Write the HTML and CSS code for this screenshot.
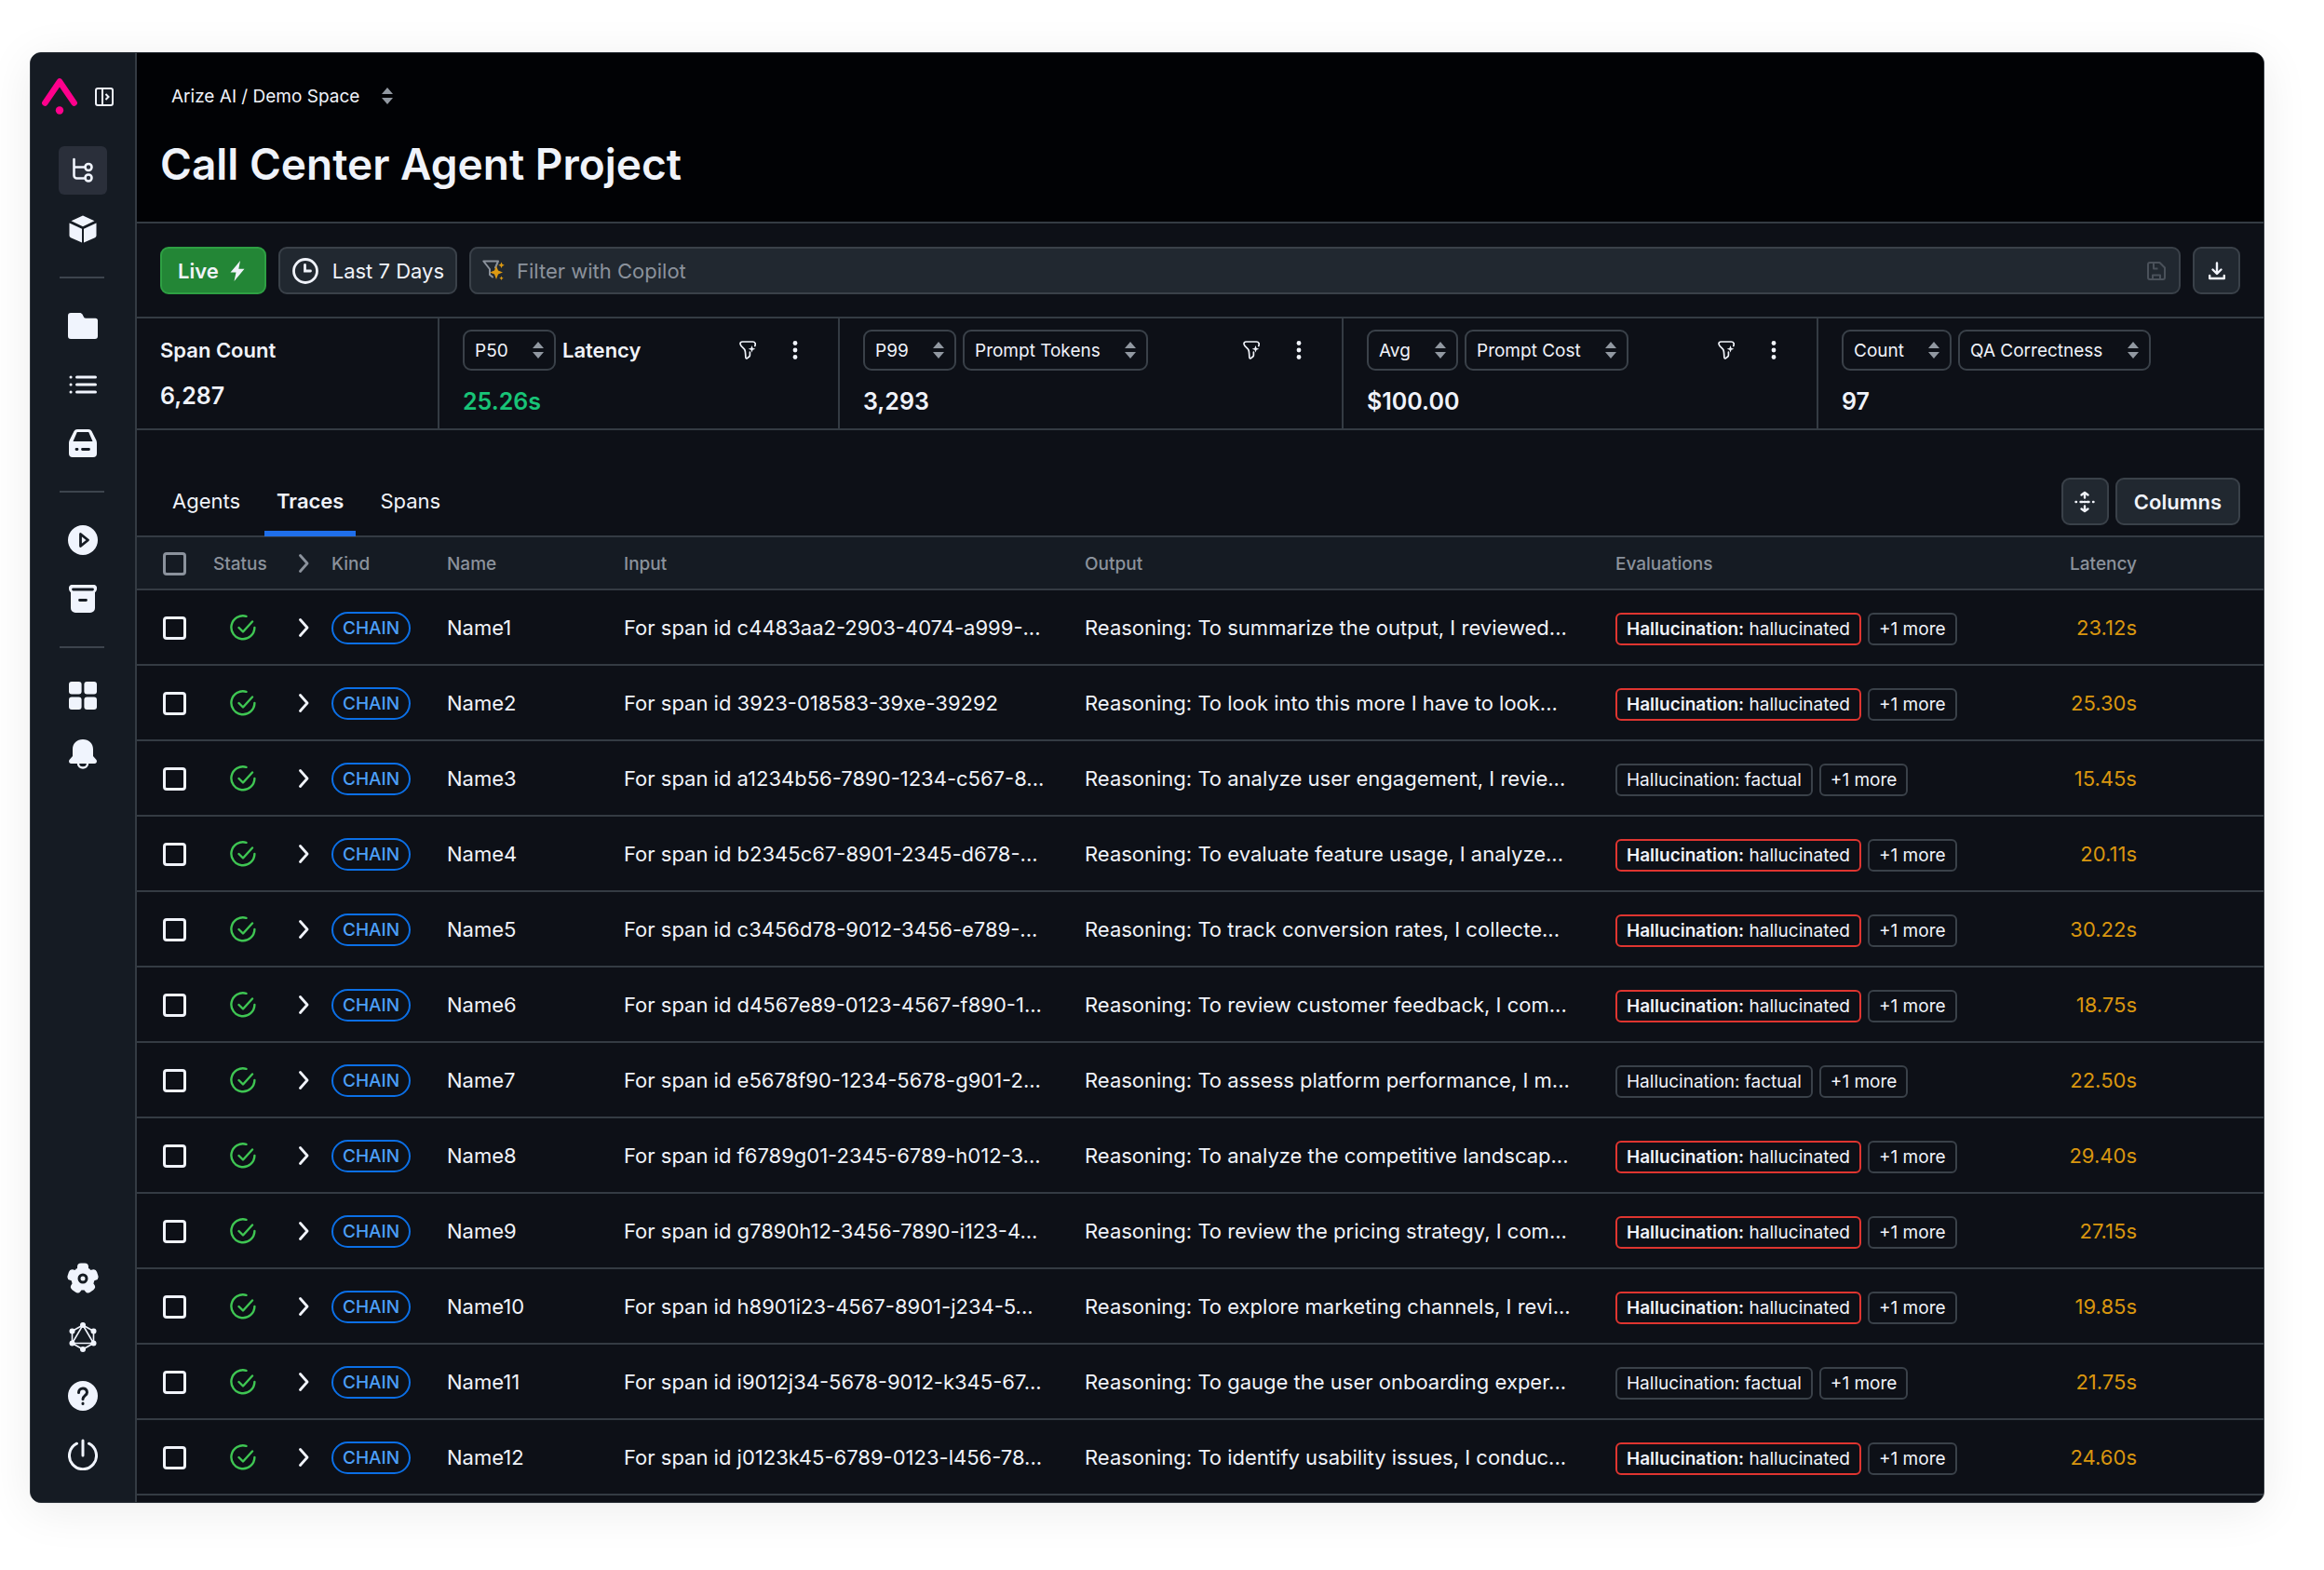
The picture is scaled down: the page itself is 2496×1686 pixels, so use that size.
FILE: index.html
```html
<!DOCTYPE html>
<html lang="en">
<head>
    <meta charset="UTF-8">
    <meta name="viewport" content="width=device-width, initial-scale=1.0">
    <title>Call Center Agent Project</title>
    <link rel="stylesheet" href="styles.css">
</head>
<body>
    <svg width="0" height="0" class="sprite" aria-hidden="true">
        <symbol id="sort" viewBox="0 0 12 18"><path d="M6 0l6 7H0zM6 18l6-7H0z" fill="currentColor"/></symbol>
        <symbol id="funnel" viewBox="0 0 18 20"><path d="M16.8 5.5c.4-1 .6-2.200.2-3C16.500 1.300 15.500 1 14.500 1h-11C1.500 1 .800 2.200 1.100 3.600 1.500 6 5 8 6 10c.8 1.600.600 5 .9 8 .1 1 .9 1.200 1.700.6l2-1.600c.6-.5.8-1 .8-1.800V12" fill="none" stroke="currentColor" stroke-width="1.700" stroke-linecap="round"/><path d="M13.500 5l1 2.800 2.800 1-2.800 1-1 2.800-1-2.800-2.800-1 2.800-1z" fill="currentColor"/></symbol>
        <symbol id="dots" viewBox="0 0 6 20"><g fill="currentColor"><circle cx="3" cy="2.500" r="2.400"/><circle cx="3" cy="10" r="2.400"/><circle cx="3" cy="17.500" r="2.400"/></g></symbol>
        <symbol id="chevron" viewBox="0 0 12 20"><path d="M1.500 1.500L9 10l-7.500 8.500" fill="none" stroke="currentColor" stroke-width="2.800" stroke-linecap="round" stroke-linejoin="round"/></symbol>
        <symbol id="check" viewBox="0 0 28 28"><path d="M17.500 1.800A12.500 12.500 0 1 0 26.400 14M9.500 14l4.500 4.500L24 7.500" fill="none" stroke="currentColor" stroke-width="2.400" stroke-linecap="round" stroke-linejoin="round"/></symbol>
    </svg>

    <div class="window">
        <nav class="sidebar">
            <div class="sidebar-head">
                <svg width="39" height="39" viewBox="0 0 39 39"><path d="M3.400 26.500L19 3.600l15.600 22.900" fill="none" stroke="#ff008c" stroke-width="6.600" stroke-linecap="round" stroke-linejoin="round"/><circle cx="19" cy="34.500" r="4.200" fill="#ff008c"/></svg>
                <button class="toggle" aria-label="Expand sidebar"><svg width="20" height="20" viewBox="0 0 20 20" fill="none" stroke="currentColor" stroke-width="2"><rect x="1" y="1" width="18" height="18" rx="2"/><path d="M8 1v18M11.500 7l3 3-3 3"/></svg></button>
            </div>
            <div class="nav-group">
                <a href="#" class="nav-item active" aria-label="Tracing"><svg width="32" height="32" viewBox="0 0 32 32" fill="none" stroke="currentColor" stroke-width="2.600" stroke-linecap="round"><path d="M6.500 4v17.500a3 3 0 0 0 3 3H18M6.500 12.500H18"/><circle cx="22" cy="12.500" r="3.500"/><circle cx="22" cy="24" r="3.500"/></svg></a>
                <a href="#" class="nav-item" aria-label="Models"><svg width="30" height="30" viewBox="0 0 30 30" fill="currentColor"><path d="M15 .5l12.500 5.800L15 12.300 2.500 6.300zM.5 8.400L14 14.700V29.500L2 24.200a2.500 2.500 0 0 1-1.500-2.400zM29.500 8.400L16 14.700V29.500l12-5.300a2.500 2.500 0 0 0 1.500-2.400z"/></svg></a>
            </div>
            <hr>
            <div class="nav-group">
                <a href="#" class="nav-item" aria-label="Projects"><svg width="32" height="28" viewBox="0 0 32 28" fill="currentColor"><path d="M3 0h9.500c1.500 0 2.300.6 3 1.600L17 4.500c.5.800 1 1.200 2 1.200h10.500A2.500 2.500 0 0 1 32 8.200V25a3 3 0 0 1-3 3H3a3 3 0 0 1-3-3V3a3 3 0 0 1 3-3z"/></svg></a>
                <a href="#" class="nav-item" aria-label="List"><svg width="30" height="20" viewBox="0 0 30 20" stroke="currentColor" stroke-width="3" stroke-linecap="round"><path d="M8.500 2h20M8.500 10h20M8.500 18h20M2 2h.1M2 10h.1M2 18h.1"/></svg></a>
                <a href="#" class="nav-item" aria-label="Datasets"><svg width="30" height="30" viewBox="0 0 30 30"><path fill="currentColor" fill-rule="evenodd" d="M9 0h12a4 4 0 0 1 3.500 2L29 11c.7 1.500 1 2.500 1 4v11a4 4 0 0 1-4 4H4a4 4 0 0 1-4-4V15c0-1.500.300-2.500 1-4l4.500-9A4 4 0 0 1 9 0zM8.800 3L4.500 13h21L21.200 3z"/><path d="M8 21.500h1M14.500 21.500h7" stroke="#151b23" stroke-width="2.800" stroke-linecap="round"/></svg></a>
            </div>
            <hr>
            <div class="nav-group">
                <a href="#" class="nav-item" aria-label="Playground"><svg width="32" height="32" viewBox="0 0 32 32"><circle cx="16" cy="16" r="16" fill="currentColor"/><path d="M13.500 9.500v13L21.500 16z" fill="none" stroke="#151b23" stroke-width="2.800" stroke-linejoin="round"/></svg></a>
                <a href="#" class="nav-item" aria-label="Archive"><svg width="30" height="30" viewBox="0 0 30 30"><path fill="currentColor" d="M4 0h22a3.500 3.500 0 0 1 4 4c0 2-1 3.500-2 4v17a5 5 0 0 1-5 5H7a5 5 0 0 1-5-5V8C1 7.500 0 6 0 4a3.500 3.500 0 0 1 4-4z"/><path d="M4.500 5h21M11.500 16.500h7" stroke="#151b23" stroke-width="2.800" stroke-linecap="round"/></svg></a>
            </div>
            <hr>
            <div class="nav-group">
                <a href="#" class="nav-item" aria-label="Dashboards"><svg width="30" height="30" viewBox="0 0 30 30" fill="currentColor"><rect width="13.600" height="13.600" rx="3"/><rect x="16.400" width="13.600" height="13.600" rx="3"/><rect y="16.400" width="13.600" height="13.600" rx="3"/><rect x="16.400" y="16.400" width="13.600" height="13.600" rx="3"/></svg></a>
                <a href="#" class="nav-item" aria-label="Monitors"><svg width="30" height="32" viewBox="0 0 30 32"><path fill="currentColor" d="M15 0c6.500 0 11 4.500 11 10.500V18l3.500 4c1 1.600.3 4-2 4H2.500C.200 26-.5 23.600.5 22L4 18v-7.500C4 4.500 8.500 0 15 0z"/><path d="M10 26c0 6 10 6 10 0" fill="#151b23" stroke="currentColor" stroke-width="2.400"/></svg></a>
            </div>
            <div class="nav-group nav-bottom">
                <a href="#" class="nav-item" aria-label="Settings"><svg width="34" height="34" viewBox="-17 -17 34 34"><g fill="currentColor"><circle r="12.500"/><rect x="-6" y="-16.500" width="12" height="14" rx="4"/><rect x="-6" y="-16.500" width="12" height="14" rx="4" transform="rotate(72)"/><rect x="-6" y="-16.500" width="12" height="14" rx="4" transform="rotate(144)"/><rect x="-6" y="-16.500" width="12" height="14" rx="4" transform="rotate(216)"/><rect x="-6" y="-16.500" width="12" height="14" rx="4" transform="rotate(288)"/></g><circle r="4" fill="none" stroke="#151b23" stroke-width="3"/></svg></a>
                <a href="#" class="nav-item" aria-label="GraphQL"><svg width="30" height="32" viewBox="-15 -16 30 32" fill="none" stroke="currentColor" stroke-width="1.600"><path d="M0-13L11.500-6.500v13L0 13-11.500 6.500v-13zM0-13L11.500 6.500h-23z"/><g fill="currentColor" stroke="none"><circle cy="-13" r="3"/><circle cx="11.500" cy="-6.500" r="3"/><circle cx="11.500" cy="6.500" r="3"/><circle cy="13" r="3"/><circle cx="-11.500" cy="6.500" r="3"/><circle cx="-11.500" cy="-6.500" r="3"/></g></svg></a>
                <a href="#" class="nav-item" aria-label="Help"><svg width="32" height="32" viewBox="0 0 32 32"><circle cx="16" cy="16" r="16" fill="currentColor"/><path d="M11.500 12.500c0-6 9-6 9-.3 0 3.500-4.500 3.300-4.500 7.300M16 24v.6" fill="none" stroke="#151b23" stroke-width="3" stroke-linecap="round"/></svg></a>
                <a href="#" class="nav-item" aria-label="Log out"><svg width="32" height="34" viewBox="0 0 32 34" fill="none" stroke="currentColor" stroke-width="3" stroke-linecap="round"><path d="M16 2v16M9.500 5.200a14.500 14.500 0 1 0 13 0"/></svg></a>
            </div>
        </nav>

        <main class="main">
            <header class="header">
                <button class="breadcrumb">Arize AI / Demo Space <svg width="12" height="18"><use href="#sort"/></svg></button>
                <h1>Call Center Agent Project</h1>
            </header>

            <div class="toolbar">
                <button class="btn btn-live">Live <svg width="16" height="22" viewBox="0 0 16 22"><path fill="currentColor" d="M11 0L.5 12.500h6L4.500 22 15.500 8.800H9.300z"/></svg></button>
                <button class="btn btn-range"><svg width="28" height="28" viewBox="0 0 28 28" fill="none" stroke="currentColor" stroke-width="2.800" stroke-linecap="round"><circle cx="14" cy="14" r="12.500"/><path d="M13.500 7.500v6.500h6"/></svg> Last 7 Days</button>
                <div class="filter">
                    <svg width="24" height="23" viewBox="0 0 24 23"><path d="M14 8.500L17 1.500H1.300L8 10v6l3 2.500" fill="none" stroke="#8b929c" stroke-width="2" stroke-linecap="round" stroke-linejoin="round"/><path d="M15 6.500l2 5 5 2-5 2-2 5.500-2-5.500-5-2 5-2zM20.500 2.500l1 2.200 2.300 1-2.300 1-1 2.300-1-2.300-2.200-1 2.200-1zM20.500 17.500l.7 1.500 1.500.7-1.500.7-.7 1.600-.7-1.600-1.500-.7 1.500-.7z" fill="#dd9a12"/></svg>
                    <input type="text" placeholder="Filter with Copilot" aria-label="Filter with Copilot">
                    <svg width="20" height="20" viewBox="0 0 20 20" fill="none" stroke="#4a515a" stroke-width="2" stroke-linejoin="round"><path d="M3 1h10.500L19 6.500V17a2 2 0 0 1-2 2H3a2 2 0 0 1-2-2V3a2 2 0 0 1 2-2zM7 1v6.500h4.500M6 19v-4.500h8V19"/></svg>
                </div>
                <button class="btn btn-icon" aria-label="Download"><svg width="18" height="20" viewBox="0 0 18 20" fill="none" stroke="currentColor" stroke-width="2.400" stroke-linecap="round" stroke-linejoin="round"><path d="M9 1.500v11M4.500 8.500L9 13l4.500-4.500M1.200 15v3h15.600v-3"/></svg></button>
            </div>

            <section class="metrics">
                <div class="metric metric-plain">
                    <div class="metric-head"><span class="metric-label">Span Count</span></div>
                    <div class="metric-value">6,287</div>
                </div>
                <div class="metric">
                    <div class="metric-head">
                        <div class="picker"><select aria-label="Latency percentile"><option>P50</option></select><svg width="12" height="18"><use href="#sort"/></svg></div>
                        <span class="metric-label">Latency</span>
                        <div class="metric-actions">
                            <button aria-label="Filter"><svg width="18" height="20"><use href="#funnel"/></svg></button>
                            <button aria-label="More"><svg width="6" height="20"><use href="#dots"/></svg></button>
                        </div>
                    </div>
                    <div class="metric-value good">25.26s</div>
                </div>
                <div class="metric">
                    <div class="metric-head">
                        <div class="picker"><select aria-label="Token percentile"><option>P99</option></select><svg width="12" height="18"><use href="#sort"/></svg></div>
                        <div class="picker"><select aria-label="Token metric"><option>Prompt Tokens</option></select><svg width="12" height="18"><use href="#sort"/></svg></div>
                        <div class="metric-actions">
                            <button aria-label="Filter"><svg width="18" height="20"><use href="#funnel"/></svg></button>
                            <button aria-label="More"><svg width="6" height="20"><use href="#dots"/></svg></button>
                        </div>
                    </div>
                    <div class="metric-value">3,293</div>
                </div>
                <div class="metric">
                    <div class="metric-head">
                        <div class="picker"><select aria-label="Cost aggregation"><option>Avg</option></select><svg width="12" height="18"><use href="#sort"/></svg></div>
                        <div class="picker"><select aria-label="Cost metric"><option>Prompt Cost</option></select><svg width="12" height="18"><use href="#sort"/></svg></div>
                        <div class="metric-actions">
                            <button aria-label="Filter"><svg width="18" height="20"><use href="#funnel"/></svg></button>
                            <button aria-label="More"><svg width="6" height="20"><use href="#dots"/></svg></button>
                        </div>
                    </div>
                    <div class="metric-value">$100.00</div>
                </div>
                <div class="metric">
                    <div class="metric-head">
                        <div class="picker"><select aria-label="Evaluation aggregation"><option>Count</option></select><svg width="12" height="18"><use href="#sort"/></svg></div>
                        <div class="picker"><select aria-label="Evaluation metric"><option>QA Correctness</option></select><svg width="12" height="18"><use href="#sort"/></svg></div>
                    </div>
                    <div class="metric-value">97</div>
                </div>
            </section>

            <div class="tabs">
                <button class="tab">Agents</button>
                <button class="tab active">Traces</button>
                <button class="tab">Spans</button>
                <div class="tab-tools">
                    <button class="btn btn-icon" aria-label="Row height"><svg width="22" height="24" viewBox="0 0 22 24" fill="none" stroke="currentColor" stroke-width="2.400" stroke-linecap="round" stroke-linejoin="round"><path d="M11 2v5.500M7.500 4.500L11 2l3.500 2.500M11 16.500V22M7.500 19.500L11 22l3.500-2.500M1.500 12h.5M6.500 12h2M10.500 12h1M13.500 12h2M20 12h.5"/></svg></button>
                    <button class="btn btn-columns">Columns</button>
                </div>
            </div>

            <table class="traces">
                <colgroup>
                    <col class="col-check"><col class="col-status"><col class="col-expand"><col class="col-kind"><col class="col-name"><col class="col-input"><col class="col-output"><col><col class="col-latency">
                </colgroup>
                <thead>
                    <tr>
                        <th class="cell-check"><input type="checkbox" aria-label="Select all"></th>
                        <th>Status</th>
                        <th><svg width="12" height="20"><use href="#chevron"/></svg></th>
                        <th>Kind</th>
                        <th>Name</th>
                        <th>Input</th>
                        <th>Output</th>
                        <th>Evaluations</th>
                        <th class="cell-latency">Latency</th>
                    </tr>
                </thead>
                <tbody id="rows"></tbody>
            </table>
        </main>
    </div>

    <script src="app.js"></script>
</body>
</html>
```
FILE: app.js
```js
const traces = [
    ['c4483aa2-2903-4074-a999-...', 'To summarize the output, I reviewed...', true, '23.12s'],
    ['3923-018583-39xe-39292', 'To look into this more I have to look...', true, '25.30s'],
    ['a1234b56-7890-1234-c567-8...', 'To analyze user engagement, I revie...', false, '15.45s'],
    ['b2345c67-8901-2345-d678-...', 'To evaluate feature usage, I analyze...', true, '20.11s'],
    ['c3456d78-9012-3456-e789-...', 'To track conversion rates, I collecte...', true, '30.22s'],
    ['d4567e89-0123-4567-f890-1...', 'To review customer feedback, I com...', true, '18.75s'],
    ['e5678f90-1234-5678-g901-2...', 'To assess platform performance, I m...', false, '22.50s'],
    ['f6789g01-2345-6789-h012-3...', 'To analyze the competitive landscap...', true, '29.40s'],
    ['g7890h12-3456-7890-i123-4...', 'To review the pricing strategy, I com...', true, '27.15s'],
    ['h8901i23-4567-8901-j234-5...', 'To explore marketing channels, I revi...', true, '19.85s'],
    ['i9012j34-5678-9012-k345-67...', 'To gauge the user onboarding exper...', false, '21.75s'],
    ['j0123k45-6789-0123-l456-78...', 'To identify usability issues, I conduc...', true, '24.60s']
];

document.getElementById('rows').innerHTML = traces.map(([span, output, bad, latency], i) => `
    <tr>
        <td class="cell-check"><input type="checkbox" aria-label="Select Name${i + 1}"></td>
        <td class="cell-status"><svg width="28" height="28"><use href="#check"/></svg></td>
        <td><svg width="12" height="20"><use href="#chevron"/></svg></td>
        <td><span class="pill">CHAIN</span></td>
        <td>Name${i + 1}</td>
        <td>For span id ${span}</td>
        <td>Reasoning: ${output}</td>
        <td><div class="chips">${bad
            ? '<span class="chip chip-bad"><b>Hallucination:</b> hallucinated</span>'
            : '<span class="chip">Hallucination: factual</span>'}<span class="chip">+1 more</span></div></td>
        <td class="cell-latency">${latency}</td>
    </tr>`).join('');
```
FILE: styles.css
```css
* {
    box-sizing: border-box;
}
body {
    display: flex;
    min-height: 100vh;
    margin: 0;
    padding: 56px 64px 72px 32px;
    background: #fff;
    color: #f0f3fa;
    font-family: Inter, sans-serif;
    font-size: 22px;
}
button, input, select {
    font: inherit;
    color: inherit;
}
button {
    padding: 0;
    border: none;
    background: none;
    cursor: pointer;
}
svg {
    display: block;
    flex: none;
}
.sprite {
    position: absolute;
}
.window {
    display: flex;
    flex: 1;
    min-width: 0;
    overflow: hidden;
    border: 1px solid #30363d;
    border-radius: 12px;
    background: #0d1017;
    box-shadow: 0 8px 50px rgba(0, 0, 0, 0.08);
}

/* sidebar */
.sidebar {
    display: flex;
    flex-direction: column;
    flex: none;
    width: 114px;
    padding: 27px 0 25px;
    border-right: 2px solid #343b43;
    background: #151b23;
}
.sidebar-head {
    display: flex;
    align-items: center;
    gap: 18px;
    margin-bottom: 34px;
    padding-left: 12px;
}
.nav-group {
    display: flex;
    flex-direction: column;
    align-items: center;
    gap: 11px;
}
.nav-item {
    display: flex;
    align-items: center;
    justify-content: center;
    width: 52px;
    height: 52px;
    border-radius: 6px;
    color: #f0f4fd;
}
.nav-item.active {
    background: #2a2f3a;
}
.nav-bottom {
    margin-top: auto;
}
.sidebar hr {
    width: 48px;
    height: 2px;
    margin: 25px 0 25px 31px;
    border: none;
    background: #3d444d;
}

/* header */
.main {
    flex: 1;
    min-width: 0;
}
.header {
    padding: 26px 25px 32px;
    border-bottom: 2px solid #343b43;
    background: #010205;
}
.breadcrumb {
    display: flex;
    align-items: center;
    gap: 24px;
    height: 40px;
    padding: 0 12px;
    font-size: 19px;
}
.breadcrumb svg {
    color: #9198a1;
}
h1 {
    margin: 23px 0 0;
    font-size: 46px;
    font-weight: 600;
    line-height: 60px;
}

/* toolbar */
.toolbar {
    display: flex;
    gap: 13px;
    padding: 25px 25px 24px;
    border-bottom: 2px solid #343b43;
}
.btn {
    display: flex;
    align-items: center;
    justify-content: center;
    height: 51px;
    border: 2px solid #3a4149;
    border-radius: 9px;
    background: #212830;
}
.btn-live {
    gap: 12px;
    padding: 0 21px 0 17px;
    border-color: #2ea043;
    background: #238636;
    font-weight: 600;
}
.btn-range {
    gap: 15px;
    padding: 0 12px 0 13px;
}
.btn-icon {
    width: 51px;
}
.btn-columns {
    padding: 0 18px;
    font-weight: 600;
}
.filter {
    display: flex;
    align-items: center;
    flex: 1;
    gap: 13px;
    padding: 0 14px 0 12px;
    border: 2px solid #3a4149;
    border-radius: 9px;
    background: #212830;
}
.filter input {
    flex: 1;
    min-width: 0;
    padding: 0;
    border: none;
    outline: none;
    background: none;
}
.filter input::placeholder {
    color: #8b929c;
}

/* metrics */
.metrics {
    display: grid;
    grid-template-columns: 325fr 430fr 541fr 510fr 478fr;
    border-bottom: 2px solid #343b43;
}
.metric {
    padding: 12px 24px 9px 25px;
    border-right: 2px solid #343b43;
}
.metric:last-child {
    border-right: none;
}
.metric-head {
    display: flex;
    align-items: center;
    gap: 7px;
    height: 44px;
    margin-bottom: 13px;
}
.metric-plain .metric-head {
    margin-bottom: 7px;
}
.metric-label {
    font-weight: 600;
}
.metric-value {
    font-size: 25px;
    font-weight: 600;
    line-height: 40px;
}
.metric-value.good {
    color: #18c477;
}
.metric-actions {
    display: flex;
    gap: 7px;
    margin-left: auto;
}
.metric-actions button {
    display: grid;
    place-items: center;
    width: 44px;
    height: 44px;
}
.picker {
    display: grid;
    align-items: center;
}
.picker select, .picker svg {
    grid-area: 1 / 1;
}
.picker select {
    appearance: none;
    height: 44px;
    padding: 0 49px 0 11px;
    border: 2px solid #3a4149;
    border-radius: 9px;
    background: #0d1017;
    font-size: 19px;
}
.picker svg {
    justify-self: end;
    margin-right: 13px;
    color: #9198a1;
    pointer-events: none;
}

/* tabs */
.tabs {
    display: flex;
    gap: 13px;
    padding: 0 25px;
    border-bottom: 2px solid #343b43;
}
.tab {
    position: relative;
    padding: 51px 13px 11px;
    line-height: 51px;
}
.tab.active {
    font-weight: 600;
}
.tab.active::after {
    content: "";
    position: absolute;
    right: 0;
    bottom: -1px;
    left: 0;
    height: 6px;
    background: #1f6feb;
}
.tab-tools {
    display: flex;
    gap: 7px;
    margin-left: auto;
    padding: 51px 0 11px;
}

/* table */
.traces {
    width: 100%;
    table-layout: fixed;
    border-collapse: separate;
    border-spacing: 0;
}
.col-check { width: 82px; }
.col-status { width: 92px; }
.col-expand { width: 35px; }
.col-kind { width: 124px; }
.col-name { width: 190px; }
.col-input { width: 495px; }
.col-output { width: 570px; }
.col-latency { width: 260px; }
th, td {
    height: 81px;
    padding: 1px 0 0;
    border-bottom: 2px solid #343b43;
    text-align: left;
    white-space: nowrap;
    vertical-align: middle;
}
th {
    height: 57px;
    background: #151b23;
    color: #8b929c;
    font-size: 19px;
    font-weight: 500;
}
.traces .cell-check {
    padding-left: 28px;
}
.cell-status {
    padding-left: 18px;
    color: #3fc653;
}
.traces .cell-latency {
    padding-right: 136px;
    text-align: right;
}
td.cell-latency {
    color: #d9960f;
}
input[type="checkbox"] {
    appearance: none;
    display: block;
    width: 25px;
    height: 25px;
    margin: 0;
    border: 3px solid currentColor;
    border-radius: 4px;
}
.pill {
    display: inline-block;
    padding: 0 10px;
    border: 2px solid #0b6fe6;
    border-radius: 18px;
    color: #4c9ff8;
    font-size: 19px;
    font-weight: 500;
    line-height: 31px;
    vertical-align: middle;
}
.chips {
    display: flex;
    gap: 7px;
    padding-top: 3px;
}
.chip {
    padding: 0 10px;
    border: 2px solid #3a4149;
    border-radius: 6px;
    font-size: 19px;
    line-height: 31px;
}
.chip b {
    font-weight: 600;
}
.chip-bad {
    border-color: #df3530;
}
```
